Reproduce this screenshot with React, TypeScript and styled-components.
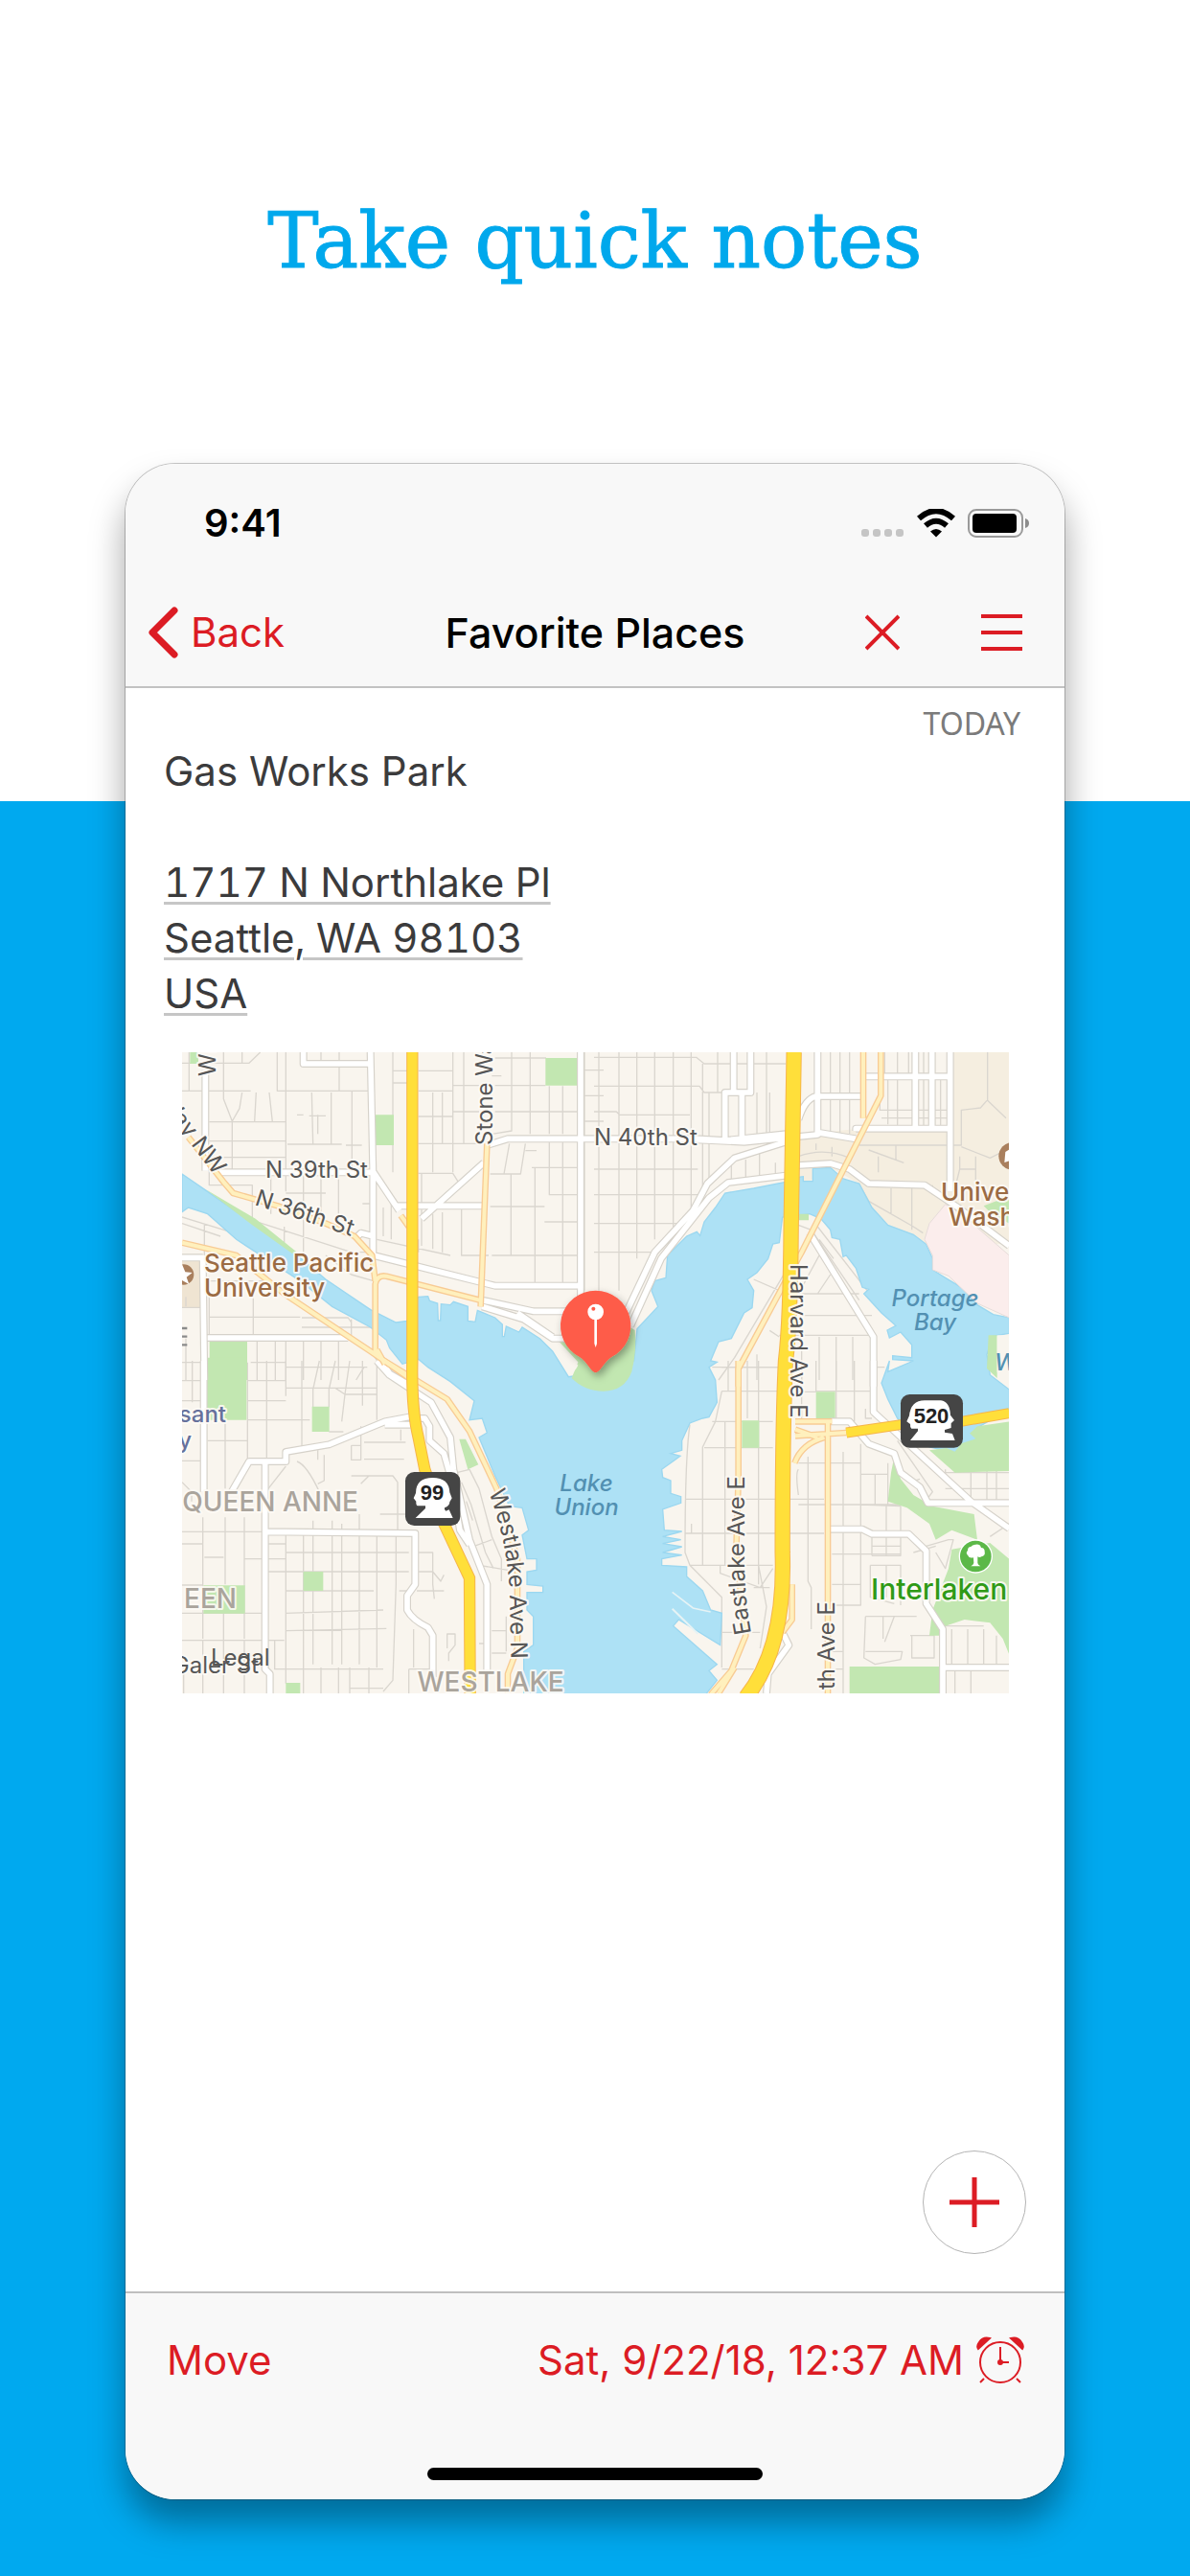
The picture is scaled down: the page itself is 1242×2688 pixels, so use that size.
import React from "react";
import styled, { createGlobalStyle } from "styled-components";

const RED = "#dc1c24";
const SANS = `Inter, "Liberation Sans", sans-serif`;

const GlobalStyle = createGlobalStyle`
  * { box-sizing: border-box; }
  body { margin: 0; background: #00a9ef; font-family: ${SANS}; }
`;

const Page = styled.main`
  display: flex;
  flex-direction: column;
  min-height: 100vh;
  padding: 0 131px 80px;
  background: linear-gradient(#fff 836px, #00a9ef 836px);
`;

const Headline = styled.h1`
  height: 484px;
  margin: 0;
  padding-top: 202px;
  color: #00a8ec;
  font: 400 80px/100px "DejaVu Serif", serif;
  -webkit-text-stroke: 1px #00a8ec;
  text-align: center;
  white-space: nowrap;
`;

const Phone = styled.section`
  display: flex;
  flex: 1;
  flex-direction: column;
  overflow: hidden;
  border-radius: 52px;
  background: #fff;
  box-shadow: 0 0 0 1px rgba(0, 0, 0, 0.22), 0 24px 36px rgba(0, 0, 0, 0.36);
`;

const TopBar = styled.header`
  border-bottom: 2px solid #c2c2c2;
  background: #f8f8f8;
`;

const StatusRow = styled.div`
  display: flex;
  align-items: center;
  justify-content: space-between;
  height: 124px;
  padding: 0 37px 0 82px;
`;

const Clock = styled.time`
  color: #000;
  font-size: 40px;
  font-weight: 600;
  line-height: 48px;
`;

const StatusIcons = styled.div`
  display: flex;
  align-items: center;
  gap: 13px;
`;

const NavRow = styled.nav`
  display: grid;
  grid-template-columns: 1fr auto 1fr;
  align-items: center;
  height: 108px;
  padding: 0 44px 4px 24px;
`;

const Title = styled.h2`
  margin: 0;
  padding-left: 20px;
  color: #000;
  font-size: 43px;
  font-weight: 500;
  line-height: 52px;
`;

const TextButton = styled.button`
  display: flex;
  align-items: center;
  gap: 13px;
  padding: 0;
  border: 0;
  background: none;
  color: ${RED};
  font-family: inherit;
  font-size: 42px;
  line-height: 52px;
  cursor: pointer;
`;

const NavActions = styled.div`
  display: flex;
  justify-content: flex-end;
  gap: 85px;
`;

const IconButton = styled.button`
  display: flex;
  padding: 0;
  border: 0;
  background: none;
  cursor: pointer;
`;

const Note = styled.article`
  display: flex;
  flex: 1;
  flex-direction: column;
  padding: 16px 40px 39px;
`;

const Stamp = styled.p`
  margin: 0;
  padding-right: 6px;
  color: #7b7b7b;
  font-family: "Noto Sans", sans-serif;
  font-size: 32px;
  line-height: 42px;
  text-align: right;
`;

const NoteText = styled.p`
  margin: 0 0 58px;
  color: #3b3b3c;
  font-size: 42px;
  line-height: 58px;
`;

const Address = styled.address`
  color: #3b3b3c;
  font-size: 42px;
  font-style: normal;
  font-variant-numeric: tabular-nums;
  line-height: 58px;

  a {
    color: inherit;
    text-decoration: underline 3px #c6c6c6;
    text-underline-offset: 5px;
  }
`;

const MapFrame = styled.figure`
  margin: 32px 18px 0 19px;
`;

const MapDrawing = styled.svg`
  display: block;
  width: 100%;
  height: auto;
  font-family: ${SANS};
`;

const AddButton = styled.button`
  display: flex;
  align-items: center;
  align-self: flex-end;
  justify-content: center;
  width: 108px;
  height: 108px;
  margin-top: auto;
  padding: 0;
  border: 1px solid #b4b4b4;
  border-radius: 50%;
  background: #fff;
  cursor: pointer;
`;

const BottomBar = styled.footer`
  display: flex;
  flex-direction: column;
  align-items: center;
  justify-content: space-between;
  height: 217px;
  padding-bottom: 20px;
  border-top: 2px solid #bfbfbf;
  background: #f8f8f8;
`;

const BottomActions = styled.div`
  display: flex;
  align-items: center;
  justify-content: space-between;
  width: 100%;
  height: 140px;
  padding: 0 42px 0 43px;
`;

const HomeIndicator = styled.div`
  width: 350px;
  height: 13px;
  border-radius: 7px;
  background: #000;
`;

/* ---------- map data ---------- */

type Tile = {
  dx: number;
  dy: number;
  parks: string;
  minor: string;
  streets: string;
  arterials: string;
};

const TILES: Tile[] = [
  {
    dx: -30,
    dy: -54,
    parks:
      "M1168 72h104v86h-104z M635 250h58v95h-58z M116 958h118v122H116z M55 54h26v36H55z M105 484 L260 575 L390 680 L375 684 L250 595z",
    minor:
      "M30 88H240L275 54 M52 54V175 M160 54V200L187 270V430 M187 270L210 230L218 180 M218 54V88 M30 175H245 M262 180L257 272H355 M303 180L313 272 M328 54V175H620 M355 54V490 M115 272H255 M115 332H355 M115 383H355 M390 250H410 M428 253H480 M455 250V310 M497 180V340 M436 180L440 340 M360 342H530 M543 345H593 M562 175V430 M522 54V175 M465 54V80 M115 410V470H250V575 M308 430V560 M355 495H480 M410 430V690 M465 440V570 M520 430V590 M595 528H620 M250 580L560 680H620 M690 54V430 M690 112H735 M690 150H735 M770 112H878 M770 175H878 M815 180V430 M845 180V340 M878 54V430 M770 255H878 M770 340H970 M770 433H878L895 460 M878 158H960 M878 240H960 M912 54V340 M1000 128H1030 M1062 54V300L1000 310 M1120 54V310 M1010 72H1170 M1010 158H1168 M1010 240H1278 M1180 160V310 M1222 160V310 M1055 340L1038 435 M1105 340L1090 435H995 M1105 362H1140 M1125 415H1278 M1180 335V500H1278 M1135 415V780 M1222 335V780 M995 537H1165 M1165 585H1278 M1060 435V690 M1000 690H1278 M780 433V660 M815 560V670 M845 555V680 M905 545V690H990 M660 540V630 M685 500V640 M640 640L870 690 M30 570L210 625 M100 590V690 M30 590L150 630 M350 600V650 M480 690L560 750L630 770 M540 830L620 860 M115 755V940 M115 770H290 M115 883H400 M253 800V940 M405 915H620 M560 890V940 M405 885H550L560 900 M30 853H90 M42 820V850 M42 950V1080 M30 1025H90 M245 1025H355 M265 960V1080 M322 960V1080 M355 960V1080 M355 1040H610 M410 960V1080 M465 960V1080 M520 960V1080 M600 1040L575 1080 M770 640V680 M1290 54V800 M1290 110H1350 M1290 190H1350 M1290 270H1350",
    streets:
      "M103 110V425 M140 430H628 M95 690L100 1080 M30 697H95 M410 54V90H618 M620 54L628 430V690 M630 430L710 550 M700 535H975 M780 575L975 400 M985 345L1050 325H1350 M1278 54V870 M570 640L590 620L630 630 M630 690L1010 785H1278 M970 830L1130 865H1278 M970 850L1100 890L1190 950H1230 M1080 870L1190 945 M110 948H550 M640 1000L680 1060L740 1095",
    arterials:
      "M50 320L160 460L190 495L330 535L480 590L570 630L625 690L635 770 M30 650L200 690L350 810L620 990L735 1070 M985 340L965 850 M635 1000V780Q640 750 670 755L970 832 M640 985L665 1030 M715 565L740 600",
  },
  {
    dx: 1290,
    dy: -54,
    parks:
      "M642 560h30v20h-30z M1220 535L1260 520L1300 515V590L1240 555z",
    minor:
      "M0 70H320L345 90H600 M15 54V800 M78 54V800 M134 54V700 M190 54V640 M248 54V600 M304 54V540 M340 90V540 M387 54V180 M0 160H330L345 180H400 M0 240H70L80 250H300 M0 420H325 M0 500H330 M0 590H270 M0 680H190 M360 180V470 M510 180V310 M550 180V310 M540 54V310 M500 90H590 M430 400V470 M475 390V460 M518 370V450 M568 400V440 M740 54V192 M770 54V192 M800 54V192 M740 192V310 M770 192V310 M800 192V310 M950 54V130 M985 54V130 M950 140V290 M895 190V235H1110 M910 54V120 M900 260H1110 M920 140V280 M1085 140V290 M1032 54V290 M1232 54V205L1290 260 M1230 205L1210 228L1150 235V345H830 M1150 350L1240 385L1290 360 M1195 380V480 M1145 380V420H1195 M1145 420L1130 480 M860 360L970 400 M945 345V390 M890 380V430 M830 465L860 520L1000 600L1030 620 M995 480V610 M1060 470V500 M930 480V560 M640 380Q720 350 800 385 M695 340V360 M745 350V380 M640 595L680 610L830 830 M705 690L640 810H830 M740 750L700 810 M700 600L855 800 M640 878H870 M600 740L440 1010L390 1080 M500 765L580 800 M580 940H870 M650 945V1080 M705 945V1080 M758 945V1080 M810 945V1080 M550 925L580 945 M510 1000V1080 M460 1040H580 M370 1040H440 M750 700L705 640 M1040 640L1090 690L1155 680L1300 810 M1155 680L1110 740",
    streets:
      "M437 54V180 M490 54V180H410V325 M463 180V320 M0 325H320L410 330L600 310 M320 328L470 335L700 312V54 M700 305L820 325 M640 265Q660 200 695 192H835 M600 335L440 385L355 465L310 550L190 680L100 870 M600 440L420 462L360 510L210 700L115 910 M640 408L740 402L800 420L860 465L1035 470L1140 540L1300 660 M850 130H1115 M1006 54V290 M1058 54V290 M1115 54V490 M820 300V293H1115 M675 620L875 945V1100",
    arterials: "M843 54V260 M898 54V190L650 680L600 770L452 1045V1100",
  },
  {
    dx: -30,
    dy: 966,
    parks:
      "M108 -10h124v195H108z M437 143h54v79h-54z M410 660h62v60h-62z M97 703h130v88H97z M355 1008h45v33h-45z M898 245L918 245L958 325L925 340z",
    minor:
      "M30 62H90 M30 125H90 M62 0V130 M30 313H98 M235 5V315 M235 62H355 M235 125H355 M235 185H400 M295 0V310 M355 0V110 M355 85H640 M405 0V280 M460 0L440 90V200 M510 0L490 90V145 M510 85L540 105L530 190 M555 0L540 105H640 M595 0V140 M640 0V185 M355 185H430 M490 222H535 M590 205V310 M600 255H730 M560 265H590V310H560V265 M600 308H725 M455 280V310 M475 295V375L455 385 M390 315Q420 325 460 410 M355 330L300 400 M560 360H690L705 380V540 M590 385L615 360 M165 180V400 M110 250H235 M30 380L60 410V440 M30 535H290 M30 573H95 M95 490V870 M165 490V700 M225 490V870 M100 615H160 M225 620H290 M30 702H95 M30 790H290 M30 875H290 M160 790V1041 M35 960V1041 M225 875V1041 M95 875V1041 M300 573H355 M355 545V1010 M410 545V1041 M440 500V950 M500 500V950 M530 510V950 M585 480V950 M640 545V960 M700 545V700L690 1000L660 1035 M355 600H740 M300 620H355 M300 660H740 M355 720H630 M355 790L660 780 M355 845L670 838 M300 875H350 M320 875V965H660 M465 960V1041 M520 960V1041 M555 960V1041 M615 960V1041 M555 1025H660 M700 600H740 M765 600H815V700L820 745 M770 660H815L840 690L850 670 M710 720H735 M765 720H850 M755 840V960 M740 965H810 M740 965V1041 M860 900V855H885V890L865 915V940 M650 480H740 M715 215V250 M890 350L930 340L960 400L1000 550L1030 620V690 M905 380L935 450L980 600L1005 650 M920 440L940 500 M945 580L1000 560 M960 610V640L1050 655 M1000 845H1045 M1000 915H1045 M960 885H975 M1045 800V910",
    streets:
      "M98 0V410 M185 410L240 315H355V285L490 262L665 190L745 175 M665 200H745 M290 315V965L305 980V1041 M290 535L760 540V700L735 735V780Q750 810 800 835L815 860V990 M640 0L680 45L810 130L870 240L880 340L930 560L985 700V980 M745 180H790L805 205V250L850 290L870 360L900 530L930 575",
    arterials: "M655 -5L860 120L930 220L1015 400L1080 620V900L1050 980V1041",
  },
  {
    dx: 1290,
    dy: 966,
    parks:
      "M695 97h60v85h-60z M463 187h54v85h-54z M800 957h285v84H800z M1050 280L1130 270L1200 205L1300 190V345L1130 350z M940 300L960 370L1000 420L1060 455L1190 480L1200 560L1120 530L1070 560L1050 510L980 460L920 440L930 350z M1120 590L1240 570L1300 620V920L1280 870L1240 820L1160 810L1100 830L1090 860H1050L1060 780L1110 650z",
    minor:
      "M400 95H580 M400 20H580 M400 95L380 190L340 270V640 M370 190H560 M345 272H560 M420 0V95 M515 0V700 M480 0V180 M410 190V640 M300 200Q285 300 285 600L300 640L400 740V960 M285 433H720 M285 540H720 M305 510V540 M300 640H560 M395 640V665L520 710L560 650 M515 640L540 770L520 900 M400 850H520 M400 965H500 M500 710H550 M650 20V190 M695 0V95H865 M758 0V95 M758 95V190 M815 0V190 M640 97H695 M850 150V180H870 M870 20H910 M640 320H835 M640 340Q630 350 640 420 M670 300V690L680 710V840 M780 285V860V1041 M835 260V765H745 M640 450H960 M745 605H960 M835 355H920 M880 355V450 M920 320V450 M745 700H835 M835 450L960 455V610H870 M915 450V610 M870 545V610 M870 580H960 M865 640H960V765 M865 640V740L940 760 M915 640V740 M850 800H1010 M850 800L845 930L880 950L960 935L965 910H850 M905 800V870 M940 800L910 880 M990 860H1065V930H995V860 M1040 580L1110 560L1125 560L1100 650L1070 600 M1000 600L1070 580 M1100 340V380 M1180 345V440 M1230 345V440 M1260 345V440 M1100 350H1300 M1100 400H1300 M1240 550L1300 510 M1120 840V960 M1170 840V960 M1220 840V960 M1100 830H1220 M950 250L1060 410L1045 430 M990 380L1020 370 M1130 970V1041 M1180 970V1041 M1260 860V960 M745 910H780 M745 965H780",
    streets:
      "M875 0V160L1180 440L1300 525 M740 190H800L860 260L940 290L960 350L1020 395L1045 445H1300 M740 527H840L870 542H985L1040 595V760L1092 840V1041 M1092 960H1300 M590 850L610 890L545 980L540 1041",
    arterials:
      "M452 0V370L445 600L475 860L430 970L365 1045 M440 960L390 1041 M630 190H745 M732 190V1041 M630 235L790 225 M630 215L700 240 M628 320Q650 260 720 240 M620 700V810L590 850",
  },
];

const WATER =
  "M0 381L80 436L350 626L450 711L590 806L670 846L705 841L740 766L770 764L775 778L800 786L802 840H809L811 788L840 791L850 781L895 796V841L918 844L925 808L980 831L1003 852V890H1009L1015 858L1055 876L1065 861L1120 896L1160 936L1210 1016L1320 1000L1415 966L1425 866L1490 796L1470 746L1480 716L1515 706L1520 636L1580 576L1612 562L1622 574L1635 531L1670 486L1700 441L1790 426L1890 406L1930 391L1945 389V404H1975V364L2030 361L2070 396L2120 411L2160 486L2210 541L2290 571L2330 601L2350 646V681L2390 706L2440 736L2490 791L2540 821L2590 831V880L2540 888L2520 946L2530 1010L2590 1056V1116L2490 1176L2410 1251L2340 1236L2240 1146L2210 1086L2190 1036L2215 966L2210 1000L2290 966L2225 962V950L2285 956V916L2250 876L2215 894L2208 870L2235 856L2190 816L2135 756L2150 742L2130 736L2110 676L2080 636L2070 640L2060 586L2035 580L2030 556L2000 521L1965 506L1880 516L1870 596L1850 600L1835 646L1800 690L1770 711L1790 746L1785 800L1760 816L1720 896L1680 906L1655 966L1675 970L1650 986L1670 1026L1675 1096L1650 1142L1630 1146L1590 1161L1565 1216V1246L1530 1256L1560 1264L1502 1306L1505 1331L1530 1341V1381L1562 1391V1411L1505 1431L1510 1496L1565 1500L1505 1516L1562 1526L1505 1538L1565 1548L1505 1566L1565 1574L1502 1586V1606L1580 1611V1641L1630 1686L1655 1746L1690 1756L1685 1856L1555 1776L1538 1796L1675 1916L1650 1936L1675 1966L1640 2010H1070V1876L1100 1856V1766L1080 1746V1691H1130V1671L1080 1666V1626L1110 1621V1586H1080L1065 1511L1085 1496L1065 1426L1025 1421L980 1326L930 1206L955 1191L940 1146L900 1151L915 1091L840 1031L770 986L740 961L690 976L650 926L640 901L590 861L470 796L370 716L170 586L80 506L20 486L0 500Z";

const CAMPUS =
  "M1925 430V260L2110 240L2405 238V0H2590V600L2330 601L2290 571L2210 541L2160 486L2120 411L2030 361Z";
const HOSPITAL =
  "M2390 476L2440 506L2590 636V831L2490 786L2400 700L2350 681V636L2325 586L2340 536Z";

const HIGHWAYS = [
  { d: "M721 0V966Q718 1116 740 1206L760 1306L820 1476L900 1646L902 2007", width: 32 },
  { d: "M1916 0L1907 546Q1905 846 1890 966Q1880 1166 1880 1566Q1890 1866 1765 2020", width: 44 },
  { d: "M2080 1191L2250 1166L2440 1156L2590 1130", width: 28 },
];

const Roads = ({ kind, color, width }: {
  kind: "minor" | "streets" | "arterials";
  color: string;
  width: number;
}) => (
  <g fill="none" stroke={color} strokeWidth={width} strokeLinejoin="round">
    {TILES.map((t, i) => (
      <path key={i} d={t[kind]} transform={`translate(${t.dx} ${t.dy})`} />
    ))}
  </g>
);

const MapText = styled.text<{ $tone?: string; $size?: number; $weight?: number; $italic?: boolean }>`
  fill: ${(p) => p.$tone ?? "#565656"};
  font-size: ${(p) => p.$size ?? 24}px;
  font-weight: ${(p) => p.$weight ?? 400};
  font-style: ${(p) => (p.$italic ? "italic" : "normal")};
  paint-order: stroke;
  stroke: rgba(253, 250, 245, 0.9);
  stroke-width: ${(p) => (p.$italic ? 0 : 4)}px;
  stroke-linejoin: round;
`;

const ShieldText = styled.text`
  fill: #222;
  font: 700 22px "Liberation Sans Narrow", "Liberation Sans", sans-serif;
  text-anchor: middle;
`;

const BROWN = "#9b6b43";
const SEA = "#5290b2";
const DISTRICT = "#aaa49c";

const PlaceMap = () => (
  <MapDrawing viewBox="0 0 863 669" role="img" aria-label="Map of Gas Works Park">
    <defs>
      <path id="westlake" d="M320 459Q341 515 342 570T344 650" />
      <path id="eastlake" d="M594 606Q587 570 587 530V430" />
      <filter id="pinShadow" x="-30%" y="-30%" width="170%" height="170%">
        <feDropShadow dx="8" dy="12" stdDeviation="12" floodOpacity="0.35" />
      </filter>
    </defs>
    <g transform="scale(0.33333)">
      <rect width="2589" height="2007" fill="#f9f5ee" />
      <path d={CAMPUS} fill="#f5eee0" />
      <path d="M0 640H60V800H0z" fill="#efe4d2" />
      <Roads kind="minor" color="#dad6cf" width={4} />
      <path d={WATER} fill="#ade1f5" stroke="#9bd7f0" strokeWidth="4" />
      <path d={HOSPITAL} fill="#fbedec" stroke="#e6dcda" strokeWidth="3" />
      <path d="M1535 1690L1600 1740L1655 1752" fill="none" stroke="#e6f3f5" strokeWidth="5" />
      <path d="M1535 1742L1615 1820" fill="none" stroke="#e6f3f5" strokeWidth="6" />
      <g fill="#c2e7b1">
        {TILES.map((t, i) => (
          <path key={i} d={t.parks} transform={`translate(${t.dx} ${t.dy})`} />
        ))}
        <path d="M1180 905L1240 970L1220 1020Q1260 1061 1320 1061Q1385 1061 1408 1000Q1425 930 1418 870L1300 800z" />
        <path d="M2525 886H2552V1020L2520 990z" />
      </g>
      <path d="M1160 920L1190 925L1240 980Q1225 1010 1208 1004z" fill="#f9f5ee" />
      <path d="M2408 1170L2450 1178L2485 1210L2440 1225L2420 1250L2395 1240z" fill="#ade1f5" />
      <path d="M2552 886H2590V1046L2552 1000z" fill="#f9f5ee" />
      <Roads kind="streets" color="#d6d2ca" width={24} />
      <Roads kind="streets" color="#ffffff" width={17} />
      <Roads kind="arterials" color="#f8cb94" width={20} />
      <Roads kind="arterials" color="#fff0bd" width={12} />
      {HIGHWAYS.map((h) => (
        <g key={h.d} fill="none">
          <path d={h.d} stroke="#f6b54a" strokeWidth={h.width + 5} />
          <path d={h.d} stroke="#ffdf3a" strokeWidth={h.width - 1} />
        </g>
      ))}
      <g>
        <circle cx="5" cy="696" r="32" fill="#a97f5d" />
        <path d="M0 664L10 688L32 690L14 704L22 726L0 714z" fill="#fff" />
        <circle cx="2600" cy="325" r="43" fill="#a97f5d" />
        <path d="M2578 312L2590 305V340L2575 345z" fill="#fff" />
        <path d="M0 864H16M0 890H16M0 916H16" stroke="#8a8a8a" strokeWidth="7" />
      </g>
      <g>
        <circle cx="2485" cy="1578" r="53" fill="#fff" />
        <circle cx="2485" cy="1578" r="49" fill="#5cb848" />
        <path d="M2485 1541q14-2 17 10q12 1 11 13q3 12-10 15q-6 4-12 0v20q1 6 9 10h-30q8-4 9-10l-1-17q-14 3-17-6q-9-9-1-16q0-12 10-12q4-7 15-7z" fill="#fff" />
      </g>
      <g>
        <rect x="699" y="1314" width="172" height="168" rx="28" fill="#454545" />
        <path d="M731 1458L762 1428V1420H738Q732 1418 733 1406L725 1396L732 1380Q732 1332 785 1332Q836 1332 838 1378L845 1396L838 1408Q838 1420 822 1426Q820 1432 826 1436L836 1432L848 1458z" fill="#fff" />
        <rect x="2250" y="1071" width="195" height="167" rx="28" fill="#454545" />
        <path d="M2280 1215L2304 1186V1178H2284Q2279 1174 2280 1164L2269 1156L2277 1138Q2282 1090 2325 1090H2376Q2404 1094 2406 1136L2418 1152L2408 1162V1176L2388 1182V1190L2412 1194L2420 1215z" fill="#fff" />
      </g>
      <g filter="url(#pinShadow)">
        <path d="M1295 746A110 110 0 0 1 1345 954C1322 968 1308 1003 1295 1003S1268 968 1245 954A110 110 0 0 1 1295 746z" fill="#fe5b49" />
      </g>
      <path d="M1291 836H1299V912L1295 924L1291 912z" fill="#fff" />
      <circle cx="1295" cy="813" r="25" fill="#fff" />
      <circle cx="1288" cy="803" r="6" fill="#fe5b49" />
    </g>

    <MapText x="87" y="131">N 39th St</MapText>
    <MapText transform="translate(75 159) rotate(18)">N 36th St</MapText>
    <MapText x="430" y="97">N 40th St</MapText>
    <MapText transform="translate(324 97) rotate(-90)">Stone Wa</MapText>
    <MapText transform="translate(35 25) rotate(-90)">WI</MapText>
    <MapText transform="translate(34 129) rotate(53)" textAnchor="end">Way NW</MapText>
    <MapText transform="translate(635 221) rotate(90)">Harvard Ave E</MapText>
    <MapText transform="translate(681 665) rotate(-90)">th Ave E</MapText>
    <MapText><textPath href="#westlake">Westlake Ave N</textPath></MapText>
    <MapText><textPath href="#eastlake">Eastlake Ave E</textPath></MapText>

    <MapText x="23" y="229" $tone={BROWN} $weight={500} $size={26}>Seattle Pacific</MapText>
    <MapText x="23" y="255" $tone={BROWN} $weight={500} $size={26}>University</MapText>
    <MapText x="792" y="155" $tone={BROWN} $weight={500} $size={26}>Unive</MapText>
    <MapText x="800" y="181" $tone={BROWN} $weight={500} $size={26}>Wash</MapText>

    <MapText x="786" y="265" $tone={SEA} $weight={500} $italic textAnchor="middle">Portage</MapText>
    <MapText x="786" y="290" $tone={SEA} $weight={500} $italic textAnchor="middle">Bay</MapText>
    <MapText x="422" y="458" $tone={SEA} $weight={500} $italic textAnchor="middle">Lake</MapText>
    <MapText x="422" y="483" $tone={SEA} $weight={500} $italic textAnchor="middle">Union</MapText>
    <MapText x="848" y="332" $tone={SEA} $weight={500} $italic>W</MapText>

    <MapText x="46" y="386" $tone="#66719c" $weight={500} textAnchor="end">sant</MapText>
    <MapText x="10" y="413" $tone="#66719c" $weight={500} textAnchor="end">y</MapText>
    <MapText x="184" y="479" $tone={DISTRICT} $weight={500} $size={28} textAnchor="end">QUEEN ANNE</MapText>
    <MapText x="57" y="580" $tone={DISTRICT} $weight={500} $size={28} textAnchor="end">EEN</MapText>
    <MapText x="322" y="667" $tone={DISTRICT} $weight={500} $size={28} textAnchor="middle">WESTLAKE</MapText>
    <MapText x="80" y="648" textAnchor="end">Galer St</MapText>
    <text x="30" y="640" fill="#565656" fontSize="24">Legal</text>
    <MapText x="719" y="571" $tone="#2f9a16" $weight={500} $size={30}>Interlaken</MapText>
    <ShieldText x="261" y="467">99</ShieldText>
    <ShieldText x="782" y="387">520</ShieldText>
  </MapDrawing>
);

export default function App() {
  return (
    <>
      <GlobalStyle />
      <Page>
        <Headline>Take quick notes</Headline>
        <Phone>
          <TopBar>
            <StatusRow>
              <Clock>9:41</Clock>
              <StatusIcons aria-hidden="true">
                <svg width="45" height="30" viewBox="0 0 45 30" fill="#c5c5c5">
                  {[0, 12, 24, 36].map((x) => (
                    <rect key={x} x={x} y="21" width="8" height="8" rx="3" />
                  ))}
                </svg>
                <svg width="40" height="30" viewBox="0 0 40 30">
                  <path d="M2 10Q20 -6 38 10" fill="none" stroke="#000" strokeWidth="6" />
                  <path d="M9 17.500Q20 8 31 17.500" fill="none" stroke="#000" strokeWidth="6" />
                  <path d="M14 23.500Q20 18.500 26 23.500L20 29.500z" />
                </svg>
                <svg width="64" height="30" viewBox="0 0 64 30">
                  <rect x="1" y="1" width="56" height="28" rx="8" fill="none" stroke="#9a9a9a" strokeWidth="2" />
                  <rect x="5" y="5" width="46" height="20" rx="4" />
                  <path d="M60 10q4 1 4 5t-4 5z" fill="#8d8d8d" />
                </svg>
              </StatusIcons>
            </StatusRow>
            <NavRow>
              <TextButton type="button">
                <svg width="31" height="54" viewBox="0 0 31 54" fill="none" stroke={RED} strokeWidth="7" strokeLinecap="round" strokeLinejoin="round" aria-hidden="true">
                  <path d="M27 4L4 27L27 50" />
                </svg>
                Back
              </TextButton>
              <Title>Favorite Places</Title>
              <NavActions>
                <IconButton type="button" aria-label="Close">
                  <svg width="36" height="40" viewBox="0 0 36 40" stroke={RED} strokeWidth="4">
                    <path d="M1 3L35 37M35 3L1 37" />
                  </svg>
                </IconButton>
                <IconButton type="button" aria-label="Menu">
                  <svg width="43" height="40" viewBox="0 0 43 40" stroke={RED} strokeWidth="4">
                    <path d="M0 3H43M0 20H43M0 37H43" />
                  </svg>
                </IconButton>
              </NavActions>
            </NavRow>
          </TopBar>
          <Note>
            <Stamp>TODAY</Stamp>
            <NoteText>Gas Works Park</NoteText>
            <Address>
              <a href="#map">
                1717 N Northlake Pl
                <br />
                Seattle, WA 98103
                <br />
                USA
              </a>
            </Address>
            <MapFrame id="map">
              <PlaceMap />
            </MapFrame>
            <AddButton type="button" aria-label="Add note">
              <svg width="54" height="54" viewBox="0 0 54 54" stroke={RED} strokeWidth="5">
                <path d="M27 1V53M1 27H53" />
              </svg>
            </AddButton>
          </Note>
          <BottomBar>
            <BottomActions>
              <TextButton type="button">Move</TextButton>
              <TextButton type="button">
                Sat, 9/22/18, 12:37 AM
                <svg width="50" height="50" viewBox="0 0 50 50" fill="none" stroke={RED} strokeWidth="2" aria-hidden="true">
                  <circle cx="25" cy="27" r="21" />
                  <path d="M25 11V27H34M8 44L4 48M42 44L46 48" />
                  <circle cx="25" cy="27" r="2" fill={RED} />
                  <path d="M14 2Q7 0 3 6Q0 10 2 13zM36 2Q43 0 47 6Q50 10 48 13z" fill={RED} />
                </svg>
              </TextButton>
            </BottomActions>
            <HomeIndicator />
          </BottomBar>
        </Phone>
      </Page>
    </>
  );
}
